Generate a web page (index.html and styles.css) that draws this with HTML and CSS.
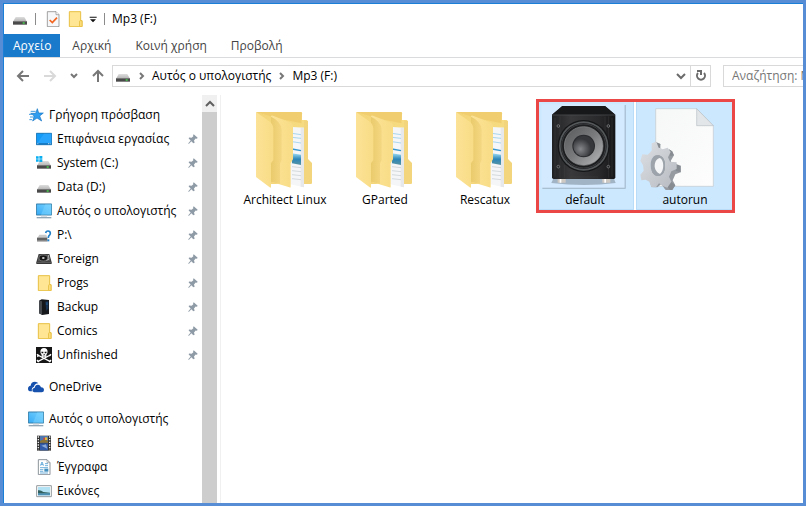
FILE: index.html
```html
<!DOCTYPE html>
<html lang="el">
<head>
<meta charset="utf-8">
<title>Mp3 (F:)</title>
<link rel="stylesheet" href="styles.css">
</head>
<body>
<svg class="defs" aria-hidden="true">
  <defs>
    <linearGradient id="gBack" x1="0" x2="1"><stop offset="0" stop-color="#f3d577"/><stop offset="1" stop-color="#f7dc83"/></linearGradient>
    <linearGradient id="gFront" x1="0" x2="1"><stop offset="0" stop-color="#fce296"/><stop offset="1" stop-color="#f8dc86"/></linearGradient>
    <linearGradient id="gShade" x1="0" x2="1"><stop offset="0" stop-color="#eacb6c"/><stop offset="1" stop-color="#f4d782"/></linearGradient>
    <linearGradient id="gSky" x1="0" y1="0" x2="0" y2="1"><stop offset="0" stop-color="#9bdcf4"/><stop offset=".5" stop-color="#2d86b8"/><stop offset="1" stop-color="#5795a3"/></linearGradient>
    <linearGradient id="gScreen" x1="0" y1="1" x2="1" y2="0"><stop offset="0" stop-color="#36aaf5"/><stop offset="1" stop-color="#78d3ff"/></linearGradient>
    <linearGradient id="gDrive" x1="0" y1="0" x2="0" y2="1"><stop offset="0" stop-color="#dedede"/><stop offset="1" stop-color="#b5b5b5"/></linearGradient>
    <linearGradient id="gBox" x1="0" x2="1"><stop offset="0" stop-color="#202123"/><stop offset=".3" stop-color="#39393b"/><stop offset=".75" stop-color="#29292b"/><stop offset="1" stop-color="#151517"/></linearGradient>
    <linearGradient id="gCone" x1="0" y1="0" x2="1" y2="1"><stop offset="0" stop-color="#56585a"/><stop offset=".5" stop-color="#7a7b7d"/><stop offset="1" stop-color="#b9babb"/></linearGradient>
    <radialGradient id="gCap" cx=".35" cy=".65"><stop offset="0" stop-color="#85878b"/><stop offset="1" stop-color="#35373b"/></radialGradient>
    <linearGradient id="gPaper" x1="0" y1="0" x2="1" y2="1"><stop offset="0" stop-color="#f6f7f7"/><stop offset="1" stop-color="#fdfdfd"/></linearGradient>
    <linearGradient id="gGear" x1="0" y1="0" x2="1" y2="1"><stop offset="0" stop-color="#dde0e4"/><stop offset="1" stop-color="#b7bbc1"/></linearGradient>
    <symbol id="drive" viewBox="0 0 48 48">
      <path d="M11 18H37L44 31H4Z" fill="url(#gDrive)"/>
      <path d="M3 30H45V41H3Z" fill="#4a4a4a"/><path d="M3 30H45V32H3ZM3 39H45V41H3Z" fill="#858585"/><path d="M32 34H38V38H32Z" fill="#45e64b"/>
    </symbol>
    <symbol id="folder" viewBox="0 0 48 48">
      <path d="M7 2H41V29H45V47H7Z" fill="#ffe694" stroke="#e8c043" stroke-width="3"/><path d="M38 47V31Q38 29 40 29H45V47Z" fill="#ffe387" stroke="#e8c043" stroke-width="3"/>
    </symbol>
    <symbol id="pc" viewBox="0 0 48 48">
      <path d="M1 3H47V36H1Z" fill="url(#gScreen)" stroke="#367fa9" stroke-width="3"/><path d="M28 4H46V35H15Z" fill="#7ed5ff" opacity=".45"/><path d="M15 38H33V41H15Z" fill="#c6d0d8"/><path d="M2 42H46V46H2Z" fill="#91a7b5"/>
    </symbol>
    <symbol id="pin" viewBox="0 0 30 32">
      <path d="M18 1L29 11L27 14L23 13L18 19L20 26L16 27L10 21L3 29L1 29L1 27L8 19L2 13L3 10L11 11L16 6L15 2Z" fill="#8e9aa5"/>
    </symbol>
    <symbol id="bigfolder" viewBox="0 0 294 270">
      <path d="M61 36H194Q198 36 198 40V60H212Q216 61 216 66V178L228 190V249L225 252H90L61 60Z" fill="url(#gBack)"/>
      <path d="M61 36H194Q198 36 198 40L196 70L120 54Z" fill="#f0ce70"/>
      <path d="M216 64V178L228 190V249L225 252H204V60Z" fill="#f3d57d"/>
      <path d="M160 80L204 83V262L160 252Z" fill="#f4f6f7"/><path d="M194 83H204V262L194 260Z" fill="#e6e8ea"/>
      <path d="M168 100L195 104M168 112L195 115M168 125L195 129" stroke="#83c6e8" stroke-width="2"/><path d="M168 147L195 152" stroke="#3897cf" stroke-width="4"/>
      <path d="M168 160L195 164V195L168 190Z" fill="url(#gSky)"/>
      <path d="M168 200L195 203M168 212L195 215M168 224L195 227M168 236L195 239" stroke="#c5cacd" stroke-width="2"/>
      <path d="M105 245V50Q105 45 111 47L167 69Q171 71 171 77V178L164 190V260Q164 264 160 262Z" fill="url(#gFront)"/>
      <path d="M105 50Q134 63 137 88V180L132 190V252L105 245Z" fill="url(#gShade)"/>
      <path d="M60 36L100 64Q110 71 112 85V180L105 190V260Q105 265 101 262L60 231Z" fill="url(#gFront)"/>
    </symbol>
  </defs>
</svg>

<div class="window">
  <header class="titlebar">
    <svg class="ico"><use href="#drive"/></svg>
    <span class="bar"></span>
    <button class="plain" aria-label="Ιδιότητες"><svg class="ico" viewBox="0 0 48 48"><path d="M7 2H33L42 11V47H7Z" fill="#f6f7f8" stroke="#777" stroke-width="2"/><path d="M33 2V11H42" fill="#fff" stroke="#888" stroke-width="2"/><path d="M14 27L22 35L36 20" fill="none" stroke="#f2641f" stroke-width="5"/></svg></button>
    <button class="plain" aria-label="Νέος φάκελος"><svg class="ico"><use href="#folder"/></svg></button>
    <button class="plain" aria-label="Προσαρμογή"><svg class="caret" viewBox="0 0 24 24"><path d="M2 5H23V8H2ZM3 13H21L12 22Z" fill="#111"/></svg></button>
    <span class="bar"></span>
    <h1 class="title">Mp3 (F:)</h1>
  </header>

  <nav class="tabs">
    <button class="tab file">Αρχείο</button>
    <button class="tab">Αρχική</button>
    <button class="tab">Κοινή χρήση</button>
    <button class="tab">Προβολή</button>
  </nav>

  <div class="navrow">
    <div class="arrows">
      <button class="plain" aria-label="Πίσω"><svg class="arrow" viewBox="0 0 14 14"><path d="M13 7H2M7 2L2 7L7 12" class="line"/></svg></button>
      <button class="plain" aria-label="Εμπρός"><svg class="arrow off" viewBox="0 0 14 14"><path d="M1 7H12M7 2L12 7L7 12" class="line"/></svg></button>
      <button class="plain" aria-label="Ιστορικό"><svg class="small" viewBox="0 0 8 8"><path d="M1 2L4 5L7 2" class="line"/></svg></button>
      <button class="plain" aria-label="Επάνω"><svg class="arrow" viewBox="0 0 14 14"><path d="M7 13V2M2 7L7 2L12 7" class="line"/></svg></button>
    </div>
    <div class="address">
      <svg class="ico"><use href="#drive"/></svg>
      <svg class="small crumb" viewBox="0 0 8 8"><path d="M2 1L5 4L2 7" class="line"/></svg>
      <a href="#">Αυτός ο υπολογιστής</a>
      <svg class="small crumb" viewBox="0 0 8 8"><path d="M2 1L5 4L2 7" class="line"/></svg>
      <a href="#">Mp3 (F:)</a>
      <button class="plain drop" aria-label="Προηγούμενες θέσεις"><svg class="chev" viewBox="0 0 10 10"><path d="M1 3L5 7L9 3" class="line"/></svg></button>
      <button class="plain refresh" aria-label="Ανανέωση"><svg class="reload" viewBox="0 0 12 12"><path d="M3 3A4 4 0 1 0 9 3" class="line"/><path d="M2 1H6V5" class="line"/></svg></button>
    </div>
    <input class="search" type="text" aria-label="Αναζήτηση" placeholder="Αναζήτηση: Mp3 (F:)">
  </div>

  <div class="body">
    <nav class="tree">
      <ul>
        <li class="root"><svg class="ico" viewBox="0 0 48 48"><path d="M28 5L32 18H46L35 27L41 42L27 33L14 42L19 27L8 19H23Z" fill="#2e9df0" stroke="#1675c4" stroke-width="2"/><path d="M8 13H23M3 22H15M6 30H18M4 38H12" stroke="#409ce0" stroke-width="3"/></svg><a href="#">Γρήγορη πρόσβαση</a></li>
        <li><svg class="ico" viewBox="0 0 48 48"><path d="M1 7H47V41H1Z" fill="#149bf8" stroke="#1976b9" stroke-width="3"/><path d="M24 8H46V36H4Z" fill="#3badff" opacity=".5"/><path d="M2 37H46V40H2Z" fill="#176dac"/><path d="M4 38H7M36 38H39M41 38H44" stroke="#fff" stroke-width="2"/></svg><a href="#">Επιφάνεια εργασίας</a><svg class="pin"><use href="#pin"/></svg></li>
        <li><svg class="ico" viewBox="0 0 48 48"><use href="#drive" width="48" height="48"/><path d="M0 4H8V11H0ZM10 3H19V11H10ZM0 13H8V20H0ZM10 13H19V21H10Z" fill="#08aef0"/></svg><a href="#">System (C:)</a><svg class="pin"><use href="#pin"/></svg></li>
        <li><svg class="ico"><use href="#drive"/></svg><a href="#">Data (D:)</a><svg class="pin"><use href="#pin"/></svg></li>
        <li><svg class="ico"><use href="#pc"/></svg><a href="#">Αυτός ο υπολογιστής</a><svg class="pin"><use href="#pin"/></svg></li>
        <li><svg class="ico" viewBox="0 0 48 48"><path d="M10 23H31L34 33H4Z" fill="#c9c9c9"/><path d="M3 32H34V43H3Z" fill="#646464"/><path d="M3 40H34V43H3Z" fill="#999"/><path d="M29 18Q30 12 36 12Q43 12 43 19Q43 23 39 26Q37 28 37 33" fill="none" stroke="#2381c8" stroke-width="5"/><path d="M34 37H40V43H34Z" fill="#2381c8"/></svg><a href="#">P:\</a><svg class="pin"><use href="#pin"/></svg></li>
        <li><svg class="ico" viewBox="0 0 48 48"><path d="M8 9H40L47 34V39H1V34Z" fill="#373737"/><path d="M9 11H39L43 31H5Z" fill="#535353"/><ellipse cx="22" cy="21" rx="13" ry="9" fill="#161616" stroke="#888" stroke-width="2"/><ellipse cx="22" cy="21" rx="4" ry="3" fill="#ccc"/><path d="M37 12L39 25L31 28" fill="none" stroke="#ddd" stroke-width="2"/><path d="M2 34H46" stroke="#777" stroke-width="2"/></svg><a href="#">Foreign</a><svg class="pin"><use href="#pin"/></svg></li>
        <li><svg class="ico"><use href="#folder"/></svg><a href="#">Progs</a><svg class="pin"><use href="#pin"/></svg></li>
        <li><svg class="ico" viewBox="0 0 48 48"><path d="M9 5L17 1L39 3V45L19 48L9 43Z" fill="#16181c"/><path d="M9 5L18 7V47L9 43Z" fill="#45484d"/><path d="M28 8L37 7V28L31 36Z" fill="#193355"/><path d="M33 10V18" stroke="#2472b5" stroke-width="2"/></svg><a href="#">Backup</a><svg class="pin"><use href="#pin"/></svg></li>
        <li><svg class="ico"><use href="#folder"/></svg><a href="#">Comics</a><svg class="pin"><use href="#pin"/></svg></li>
        <li><svg class="ico" viewBox="0 0 48 48"><path d="M0 0H48V48H0Z" fill="#161616"/><path d="M5 24L43 44M43 24L5 44" stroke="#fff" stroke-width="4"/><path d="M3 22L8 27M4 29L9 24M45 22L40 27M3 39L8 45M45 39L40 45" stroke="#fff" stroke-width="4"/><path d="M24 3C9 3 13 21 17 23V30H31V23C35 21 39 3 24 3Z" fill="#fff"/><path d="M16 14H22V19H17ZM26 14H32L31 19H26ZM23 21H26V24H23ZM20 26H28V28H20Z" fill="#111"/></svg><a href="#">Unfinished</a><svg class="pin"><use href="#pin"/></svg></li>
      </ul>
      <ul>
        <li class="root"><svg class="ico" viewBox="0 0 48 48"><path d="M9 37Q0 37 0 29Q0 21 8 20Q9 8 21 8Q28 8 31 13Q20 14 18 23Q9 26 12 37Z" fill="#1651ad"/><path d="M19 40Q12 39 13 32Q14 27 20 26Q22 16 31 17Q37 18 39 25Q48 26 48 33Q48 40 41 40Z" fill="#1651ad"/></svg><a href="#">OneDrive</a></li>
      </ul>
      <ul>
        <li class="root"><svg class="ico"><use href="#pc"/></svg><a href="#">Αυτός ο υπολογιστής</a></li>
        <li><svg class="ico" viewBox="0 0 48 48"><path d="M3 2H45V47H3Z" fill="#333"/><path d="M12 3H36V23H12Z" fill="#4d76ae"/><path d="M12 25H36V46H12Z" fill="#325baa"/><path d="M12 18Q24 10 36 18V23H12Z" fill="#8c7534"/><path d="M27 7H34V15H27Z" fill="#e7bb38"/><path d="M22 8H27V14H22Z" fill="#cf4439"/><path d="M16 32L30 28L34 41Z" fill="#8ba9d4"/><path d="M7 4V46M41 4V46" stroke="#eee" stroke-width="4" stroke-dasharray="4 4"/></svg><a href="#">Βίντεο</a></li>
        <li><svg class="ico" viewBox="0 0 48 48"><path d="M7 2H33L42 11V47H7Z" fill="#fff" stroke="#8c9499" stroke-width="3"/><path d="M33 2V11H42" fill="none" stroke="#8c9499" stroke-width="2"/><path d="M13 20L18 9L23 20M15 17H21M27 14H36M27 20H36M12 26H36M12 32H22M12 37H22M12 42H36" fill="none" stroke="#2988c8" stroke-width="2"/><path d="M25 29H37V38H25Z" fill="#438fbd"/></svg><a href="#">Έγγραφα</a></li>
        <li><svg class="ico" viewBox="0 0 48 48"><path d="M2 8H46V41H2Z" fill="#fff" stroke="#93999d" stroke-width="3"/><path d="M6 12H42V37H6Z" fill="#b4e2f5"/><path d="M6 22Q14 20 22 27L42 29V32H6Z" fill="#31605f"/><path d="M6 31H42V37H6Z" fill="#4b8fb5"/></svg><a href="#">Εικόνες</a></li>
      </ul>
    </nav>
    <div class="scroll"><button class="plain up" aria-label="Κύλιση επάνω"><svg class="chev" viewBox="0 0 10 10"><path d="M1 7L5 3L9 7" class="line"/></svg></button></div>

    <main class="files">
      <button class="tile"><svg class="art"><use href="#bigfolder"/></svg><span>Architect Linux</span></button>
      <button class="tile"><svg class="art"><use href="#bigfolder"/></svg><span>GParted</span></button>
      <button class="tile"><svg class="art"><use href="#bigfolder"/></svg><span>Rescatux</span></button>
      <div class="marked">
        <button class="tile selected"><svg class="art" viewBox="18 15 294 270">
          <path d="M37 30H287V281H37Z" fill="#9eb3c5"/><path d="M35 28H284V278H35Z" fill="#d4eaff"/>
          <path d="M72 246H250L257 264Q165 276 64 264Z" fill="#7f909f" opacity=".6"/>
          <path d="M83 250H107V263H83ZM217 250H241V263H217Z" fill="#cfc9c4"/><path d="M89 250H94V263H89ZM223 250H228V263H223Z" fill="#fff"/>
          <path d="M66 59L97 33H225L256 59V247Q256 252 251 252H71Q66 252 66 247Z" fill="url(#gBox)"/>
          <path d="M66 59L97 33H225L256 59Z" fill="#17181a"/><path d="M67 60H255" stroke="#505154" stroke-width="2"/>
          <path d="M75 68V245M90 64V248M104 210V248M225 65V110M236 64V248M246 68V245M120 246H205" stroke="#454547" stroke-width="2" opacity=".6"/>
          <circle cx="161" cy="153" r="78" fill="#151617"/><circle cx="161" cy="153" r="74" fill="#55585a"/><circle cx="161" cy="153" r="69" fill="#1c1d1f"/><circle cx="161" cy="153" r="66" fill="none" stroke="#4a4c4e" stroke-width="2"/><circle cx="161" cy="153" r="58" fill="url(#gCone)" stroke="#8a8c8e" stroke-width="2"/>
          <circle cx="161" cy="153" r="34" fill="#292b2e"/><circle cx="161" cy="153" r="31" fill="url(#gCap)"/>
          <g fill="#222" stroke="#8d8f91" stroke-width="2"><circle cx="85" cy="93" r="4"/><circle cx="235" cy="93" r="4"/><circle cx="85" cy="215" r="4"/><circle cx="235" cy="215" r="4"/></g>
        </svg><span>default</span></button>
        <button class="tile selected"><svg class="art" viewBox="18 15 294 270">
          <path d="M77 41H200L250 92V274H77Z" fill="url(#gPaper)" stroke="#c1c8ce" stroke-width="2"/><path d="M200 41V92H250Z" fill="#e2e6e9" stroke="#b7bfc5" stroke-width="2"/>
          <path d="M77 140L91 147L87 165L104 177L121 165L132 181L122 198L130 215L152 212V232L136 238L128 256L136 271L124 289L106 284L94 267L82 277L64 276L60 258Z" fill="#969ba2"/>
          <path d="M116 162L127 169L132 181L121 183ZM136 206L152 212V232L137 227ZM120 258L136 271L124 289L112 275ZM79 143L91 147V164L82 160Z" fill="#878c93"/>
          <path fill-rule="evenodd" d="M65 145L79 140L86 158Q92 159 98 163L113 158L122 171L114 187L120 200L140 202V222L124 229L117 245L124 260L112 278L98 273L87 265L78 277H64L58 260L47 254L34 256L31 239L41 227L39 211L31 197L37 178L53 179L65 167ZM84 181C69 180 62 194 62 210C62 228 70 243 85 243C99 243 106 228 105 211C105 194 98 182 84 181Z" fill="url(#gGear)"/>
          <path fill-rule="evenodd" d="M84 181C69 180 62 194 62 210C62 228 70 243 85 243C99 243 106 228 105 211C105 194 98 182 84 181ZM90 189C102 194 104 226 90 237C79 232 73 222 74 210C75 199 81 190 90 189Z" fill="#9da3ab"/>
          <path d="M90 189C102 194 104 226 90 237C79 232 73 222 74 210C75 199 81 190 90 189Z" fill="#f4f5f6"/>
        </svg><span>autorun</span></button>
      </div>
    </main>
  </div>
</div>
</body>
</html>
```

FILE: styles.css
```css
* { box-sizing: border-box; }

body {
  margin: 0;
  background: #568dd5;
  color: #000;
  font: 12px/16px "Open Sans", "Noto Sans", sans-serif;
}

button, input { font: inherit; color: inherit; }
a { color: inherit; text-decoration: none; white-space: nowrap; }
svg { display: block; flex: none; }
ul { list-style: none; margin: 0; padding: 0; }

.defs { position: absolute; width: 0; height: 0; }

.window {
  display: flex;
  flex-direction: column;
  height: 100vh;
  overflow: hidden;
  border: 3px solid #568dd5;
  box-shadow: inset 1px 1px #1a7fd7;
  padding: 1px 0 0 1px;
}

.window > * { background: #fff; }

.plain {
  display: flex;
  align-items: center;
  justify-content: center;
  padding: 0;
  border: 0;
  background: none;
}

.ico { width: 16px; height: 16px; }
.line { fill: none; stroke: currentColor; stroke-width: 2; }

.titlebar {
  display: flex;
  align-items: center;
  height: 30px;
  padding-left: 8px;
  gap: 6px;
}

.bar { width: 1px; height: 12px; background: #8b8b8b; margin: 0 1px; }
.titlebar .bar + .plain { margin-left: 2px; }
.caret { width: 8px; height: 8px; }
.title { margin: 0; font-size: 12px; font-weight: 400; }

.tabs {
  display: flex;
  height: 24px;
  border-bottom: 1px solid #dadbdc;
}

.tab {
  padding: 0 12px;
  border: 0;
  background: none;
  color: #444;
}

.tab.file { padding: 0 9px; background: #1979ca; color: #fff; }

.navrow {
  display: flex;
  align-items: center;
  height: 37px;
  gap: 12px;
  padding: 0 0 2px 12px;
}

.arrows { display: flex; align-items: center; gap: 13px; width: 84px; color: #777; }
.arrow { width: 14px; height: 14px; }
.arrow.off { color: #d9d9d9; }
.small { width: 8px; height: 8px; }
.chev { width: 10px; height: 10px; }

.address {
  display: flex;
  align-items: center;
  flex: 1;
  height: 22px;
  border: 1px solid #d9d9d9;
  padding-left: 2px;
}

.crumb { margin: 0 6px 0 7px; color: #777; }
.drop { width: 18px; margin-left: auto; color: #6b6b6b; }
.refresh { width: 20px; height: 20px; border-left: 1px solid #d9d9d9; color: #6b6b6b; }
.reload { width: 12px; height: 12px; }

.search {
  width: 80px;
  height: 22px;
  padding: 0 0 0 8px;
  border: 1px solid #d9d9d9;
  border-right: 0;
  border-radius: 0;
  outline: 0;
  background: #fff;
}

.search::placeholder { color: #767676; opacity: 1; }

.body { display: flex; flex: 1; min-height: 0; }

.tree {
  display: flex;
  flex-direction: column;
  gap: 8px;
  width: 198px;
  padding: 8px 4px 0 24px;
  overflow: hidden;
}

.tree li {
  display: flex;
  align-items: center;
  gap: 5px;
  height: 24px;
  padding-left: 8px;
}

.tree .root { padding-left: 0; }
.pin { width: 10px; height: 11px; margin-left: auto; }

.scroll { width: 15px; background: #cdcdcd; }
.up { width: 100%; height: 17px; background: #f0f0f0; color: #606060; }

.files {
  display: flex;
  align-items: flex-start;
  flex: 1;
  gap: 2px;
  margin-left: 3px;
  padding: 5px 0 0 15px;
  border-left: 1px solid #f0f0f0;
}

.tile {
  width: 98px;
  padding: 0;
  border: 0;
  background: none;
  line-height: 20px;
  text-align: center;
}

.tile span { display: block; white-space: nowrap; }
.tile.selected { background: #cce8ff; box-shadow: inset 0 0 0 1px #b9dcf8; }
.art { width: 98px; height: 90px; }

.marked { position: relative; display: flex; gap: 2px; }

.marked::after {
  content: "";
  position: absolute;
  inset: -1px -1px -3px 0;
  border: 3px solid #eb4747;
  pointer-events: none;
}
```
